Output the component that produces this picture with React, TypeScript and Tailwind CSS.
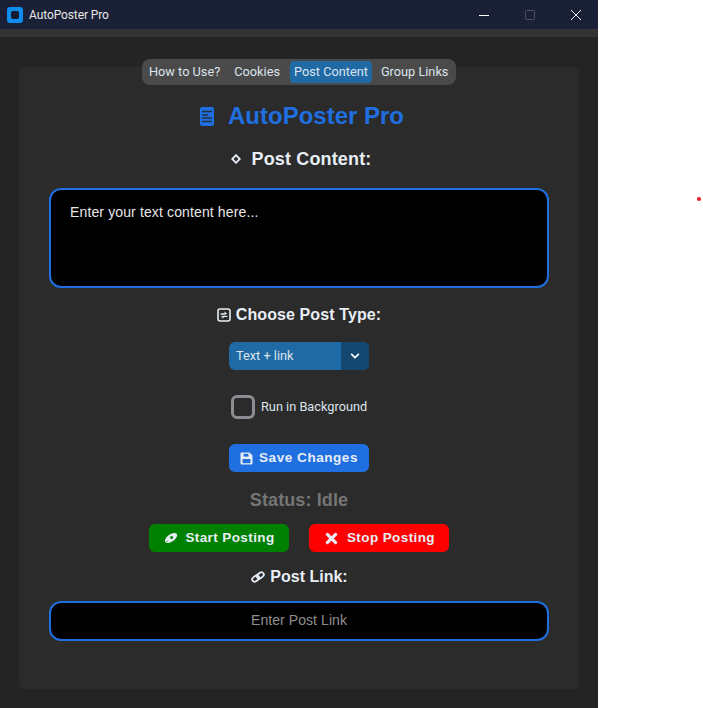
import { FaChevronDown, FaTimes } from "react-icons/fa";

const TABS = ["How to Use?", "Cookies", "Post Content", "Group Links"];

function AppGlyph() {
  return (
    <div className="flex h-4 w-4 items-center justify-center rounded-[3px] bg-[#0f8cf0]">
      <div className="h-2 w-2 rounded-[2px] bg-[#141b2e]" />
    </div>
  );
}

function TitleBar() {
  return (
    <div className="flex h-[29px] items-center bg-[#1a2035] text-[#e8e8e8]">
      <div className="ml-[7px]">
        <AppGlyph />
      </div>
      <span className="ml-[6px] font-['Roboto',sans-serif] text-[12px] tracking-[-0.1px]">AutoPoster Pro</span>
      <div className="ml-auto flex items-center">
        <svg width="12" height="12" viewBox="0 0 12 12" className="mr-[34px]">
          <path d="M1 6.5h10" stroke="#fff" strokeWidth="1" />
        </svg>
        <svg width="12" height="12" viewBox="0 0 12 12" className="mr-[34px]">
          <rect x="1.5" y="1.5" width="9" height="9" rx="1" fill="none" stroke="#4b5160" strokeWidth="1" />
        </svg>
        <svg width="12" height="12" viewBox="0 0 12 12" className="mr-[16px]">
          <path d="M1 1l10 10M11 1L1 11" stroke="#f0f0f0" strokeWidth="1" />
        </svg>
      </div>
    </div>
  );
}

function Tabs() {
  return (
    <div className="absolute left-[123px] top-[-8px] flex h-[26px] w-[314px] items-center gap-[6px] rounded-lg bg-[#4a4a4a] pl-[3px] font-['Roboto',sans-serif] text-[12.75px] text-[#dce4ec]">
      {TABS.map((tab) => (
        <span
          key={tab}
          className={tab === "Post Content" ? "mr-[-1px] rounded-[4px] bg-[#1f6aa5] px-[4px] py-[1px]" : "px-[4px] py-[1px]"}
        >
          {tab}
        </span>
      ))}
    </div>
  );
}

function NotebookIcon() {
  return (
    <svg width="14" height="19" viewBox="0 0 14 19">
      <rect width="14" height="19" rx="2" fill="#1f6fe0" />
      <path d="M2 4.5h10M2 8h6M2 11h10M2 14.5h10" stroke="#23303f" strokeWidth="1.4" />
    </svg>
  );
}

function DiamondIcon() {
  return (
    <svg width="10" height="10" viewBox="0 0 10 10">
      <path d="M5 1.2L8.8 5 5 8.8 1.2 5z" fill="none" stroke="#e8eef5" strokeWidth="1.8" />
    </svg>
  );
}

function PostTypeIcon() {
  return (
    <svg width="14" height="14" viewBox="0 0 14 14">
      <rect x="1" y="1" width="12" height="12" rx="2" fill="none" stroke="#e8eef5" strokeWidth="1.6" />
      <path d="M3.6 6h5M10.4 8.4H5.4" stroke="#e8eef5" strokeWidth="1.4" />
      <path d="M7.6 3.6L10.4 6 7.6 6zM6.4 10.8L3.6 8.4l2.8 0z" fill="#e8eef5" />
    </svg>
  );
}

function SaveIcon() {
  return (
    <svg width="13" height="13" viewBox="0 0 13 13">
      <path d="M1.5.5h8l3 3v7.5a1.5 1.5 0 0 1-1.5 1.5h-9.5a1 1 0 0 1-1-1v-10a1 1 0 0 1 1-1z" fill="#e8eef5" />
      <rect x="3.5" y="1.8" width="5" height="2.8" fill="#1f6fe0" />
      <rect x="2.6" y="7" width="7.8" height="4.2" fill="#1f6fe0" />
    </svg>
  );
}

function RocketIcon() {
  return (
    <svg width="14" height="12" viewBox="0 0 14 12">
      <ellipse cx="7" cy="6" rx="7" ry="3.6" transform="rotate(-35 7 6)" fill="#e8eef5" />
      <circle cx="7.6" cy="5.6" r="1.5" fill="#008000" />
      <path d="M2 10.5l2-2" stroke="#008000" strokeWidth="0.8" />
    </svg>
  );
}

function LinkIcon() {
  return (
    <svg width="14" height="12" viewBox="0 0 14 12">
      <g transform="rotate(-35 7 6)" fill="none" stroke="#e8eef5" strokeWidth="1.8">
        <rect x="0.5" y="3.6" width="7.5" height="4.8" rx="2.4" />
        <rect x="6" y="3.6" width="7.5" height="4.8" rx="2.4" />
      </g>
    </svg>
  );
}

export default function App() {
  return (
    <div className="relative flex h-[708px] w-[703px] overflow-hidden bg-white">
      <div className="flex w-[598px] flex-col bg-[#242424]">
        <TitleBar />
        <div className="h-2 bg-[#333333]" />
        <div className="relative mx-[19px] mt-[30px] flex h-[622px] flex-col items-center rounded-md bg-[#2b2b2b] font-['Liberation_Sans',sans-serif]">
          <Tabs />

          <div className="mt-[35px] ml-[6px] flex h-7 items-center gap-[14px] text-[24px] font-bold text-[#1f6fe0]">
            <NotebookIcon />
            <span>AutoPoster Pro</span>
          </div>

          <div className="mt-[19px] ml-[4px] flex h-[20px] items-center gap-[11px] text-[18px] font-bold tracking-[0.15px] text-[#e8eef5]">
            <DiamondIcon />
            <span>Post Content:</span>
          </div>

          <div className="mt-[19px] h-[100px] w-[500px] rounded-xl border-2 border-[#1f6fe0] bg-black px-[19px] py-[12px] text-[14px] tracking-[0.13px] text-[#e8e8e8]">
            Enter your text content here...
          </div>

          <div className="mt-[18px] flex h-[18px] items-center gap-[5px] text-[16px] font-bold tracking-[0.1px] text-[#e8eef5]">
            <PostTypeIcon />
            <span>Choose Post Type:</span>
          </div>

          <div className="mt-[18px] flex h-7 w-[140px] overflow-hidden rounded-md bg-[#1f6aa5] font-['Roboto',sans-serif] text-[12.75px] text-[#dce4ec]">
            <span className="flex flex-1 items-center pl-[7px]">Text + link</span>
            <span className="flex w-7 items-center justify-center bg-[#144870]">
              <FaChevronDown className="text-[10px] text-white" />
            </span>
          </div>

          <div className="mt-[25px] flex h-6 w-[140px] items-center gap-[6px] pl-[2px] font-['Roboto',sans-serif] text-[12.75px] whitespace-nowrap text-[#dce4ec]">
            <span className="h-6 w-6 shrink-0 rounded-md border-[3px] border-[#8a8d91]" />
            <span>Run in Background</span>
          </div>

          <div className="mt-[25px] flex h-7 w-[140px] items-center justify-center gap-[6px] rounded-md bg-[#1f6fe0] text-[13.5px] font-bold tracking-[0.55px] text-[#e8eef5]">
            <SaveIcon />
            <span>Save Changes</span>
          </div>

          <div className="mt-[17px] flex h-[22px] items-center text-[18px] font-bold tracking-[0.12px] text-[#757575]">Status: Idle</div>

          <div className="mt-[13px] flex gap-5">
            <div className="flex h-7 w-[140px] items-center justify-center gap-[7px] rounded-md bg-[#008000] pl-[1px] text-[13.5px] font-bold tracking-[0.4px] text-[#e8eef5]">
              <RocketIcon />
              <span>Start Posting</span>
            </div>
            <div className="flex h-7 w-[140px] items-center justify-center gap-[7px] rounded-md bg-[#ff0000] text-[13.5px] font-bold tracking-[0.4px] text-[#e8eef5]">
              <FaTimes className="text-[17px]" />
              <span>Stop Posting</span>
            </div>
          </div>

          <div className="mt-4 ml-[1px] flex h-[18px] items-center gap-[5px] text-[16px] font-bold text-[#e8eef5]">
            <LinkIcon />
            <span>Post Link:</span>
          </div>

          <div className="mt-[15px] flex h-10 w-[500px] items-center justify-center rounded-xl border-2 border-[#1f6fe0] bg-black pb-[1px] text-[14px] tracking-[0.07px] text-[#8f8f8f]">
            Enter Post Link
          </div>
        </div>
      </div>
      <span className="absolute left-[697px] top-[197px] h-1 w-1 rounded-full bg-[#ed1c24]" />
    </div>
  );
}
